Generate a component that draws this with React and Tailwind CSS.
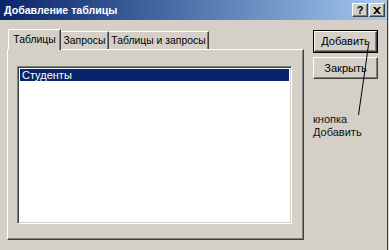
export default function App() {
  const raised =
    "border border-t-white border-l-white border-r-[#404040] border-b-[#404040] shadow-[inset_-1px_-1px_0_#808080]";
  return (
    <div className="relative w-[389px] h-[250px] overflow-hidden bg-[#d4d0c8] font-['Liberation_Sans',Arial,sans-serif] text-[11px] leading-[13px] text-black">
      <div className="flex h-[250px] w-[388px] flex-col border-r border-r-[#404040]">
        {/* title bar */}
        <div className="flex h-[20px] items-center bg-linear-to-r from-[#0a246a] to-[#a6caf0] pl-[4px] pr-[2px]">
          <span className="flex-1 text-[10.6px] font-bold text-white">Добавление таблицы</span>
          <div className="flex gap-[1px]">
            <div className={`flex h-[14px] w-[16px] items-center justify-center bg-[#d4d0c8] text-[11px] font-bold leading-[12px] ${raised}`}>
              ?
            </div>
            <div className={`flex h-[14px] w-[16px] items-center justify-center bg-[#d4d0c8] ${raised}`}>
              <svg width="8" height="7" viewBox="0 0 8 7">
                <path d="M0 0h2l2 2 2-2h2L5 3.5 8 7H6L4 5 2 7H0l3-3.5z" fill="#000" />
              </svg>
            </div>
          </div>
        </div>

        <div className="flex">
          {/* left: tabs + panel */}
          <div className="ml-[7px] mt-[9px] flex flex-col">
            <div className="flex h-[20px] items-end whitespace-nowrap pl-[1px] text-[10.4px]">
              <div className="relative z-10 -mb-[1px] flex h-[21px] w-[53px] shrink-0 items-start justify-center border-l border-t border-r border-t-white border-l-white border-r-[#404040] bg-[#d4d0c8] pt-[3px] shadow-[inset_-1px_0_0_#808080]">
                Таблицы
              </div>
              <div className="flex h-[18px] w-[48px] shrink-0 items-start justify-center border-t border-r border-t-white border-r-[#404040] pt-[2px] shadow-[inset_-1px_0_0_#808080]">
                Запросы
              </div>
              <div className="flex h-[18px] w-[100px] shrink-0 items-start justify-center border-t border-r border-t-white border-r-[#404040] pt-[2px] shadow-[inset_-1px_0_0_#808080]">
                Таблицы и запросы
              </div>
            </div>
            <div className={`h-[191px] w-[297px] pl-[9px] pt-[16px] ${raised}`}>
              <div className="h-[158px] w-[275px] border border-t-[#808080] border-l-[#808080] border-r-white border-b-white bg-white shadow-[inset_1px_1px_0_#404040,inset_-1px_-1px_0_#d4d0c8] p-[2px]">
                <div className="h-[12px] bg-[#0a246a] pl-[2px] leading-[12px] text-white">Студенты</div>
              </div>
            </div>
          </div>

          {/* right: buttons + note */}
          <div className="ml-[9px] mt-[10px] flex flex-col">
            <div className="h-[23px] w-[65px] border border-black">
              <div className={`flex h-full w-full items-center justify-center bg-[#d4d0c8] ${raised}`}>
                Добавить
              </div>
            </div>
            <div className={`mt-[4px] flex h-[22px] w-[65px] items-center justify-center bg-[#d4d0c8] ${raised}`}>
              Закрыть
            </div>
            <div className="mt-[34px] text-[#111]">
              <div>кнопка</div>
              <div>Добавить</div>
            </div>
          </div>
        </div>
      </div>

      <svg className="pointer-events-none absolute left-0 top-0" width="389" height="250">
        <line x1="368.5" y1="45" x2="358.5" y2="115" stroke="#000" strokeWidth="1" />
      </svg>
    </div>
  );
}
